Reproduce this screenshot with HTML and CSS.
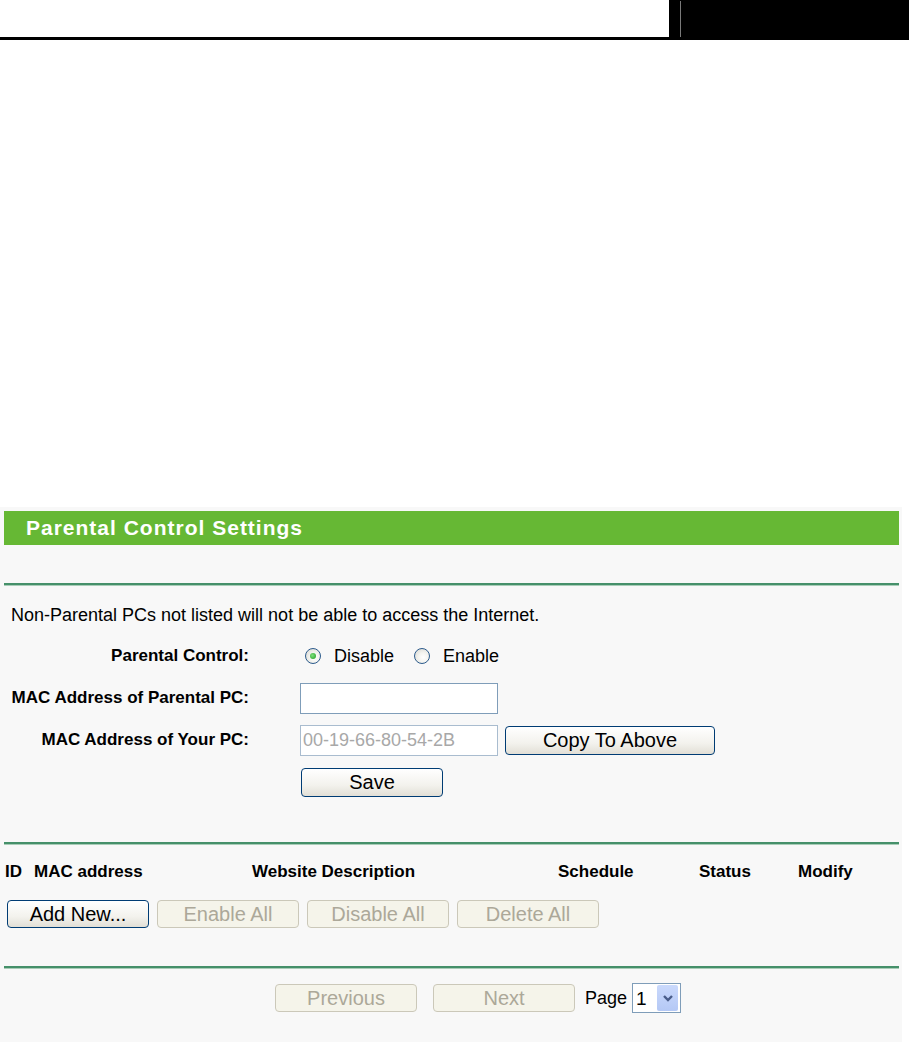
FILE: index.html
```html
<!DOCTYPE html>
<html lang="en">
<head>
    <meta charset="UTF-8">
    <meta name="viewport" content="width=device-width, initial-scale=1.0">
    <title>Parental Control Settings</title>
    <link rel="stylesheet" href="styles.css">
</head>
<body>
    <div class="topbar">
        <div class="topbar-block"><div class="topbar-rule"></div></div>
    </div>

    <div class="panel">
        <div class="title-bar">Parental Control Settings</div>
        <hr class="rule rule-top">

        <p class="note">Non-Parental PCs not listed will not be able to access the Internet.</p>

        <form class="settings" onsubmit="return false;">
            <div class="label">Parental Control:</div>
            <div class="field">
                <label class="radio"><input type="radio" name="pc" checked> Disable</label>
                <label class="radio"><input type="radio" name="pc"> Enable</label>
            </div>

            <div class="label">MAC Address of Parental PC:</div>
            <div class="field">
                <input type="text" class="text-input">
            </div>

            <div class="label">MAC Address of Your PC:</div>
            <div class="field">
                <input type="text" class="text-input readonly" value="00-19-66-80-54-2B" readonly>
                <button type="button" class="btn btn-wide">Copy To Above</button>
            </div>

            <div class="label"></div>
            <div class="field">
                <button type="submit" class="btn">Save</button>
            </div>
        </form>

        <hr class="rule rule-mid">

        <div class="list-head">
            <span>ID</span>
            <span>MAC address</span>
            <span>Website Description</span>
            <span>Schedule</span>
            <span>Status</span>
            <span>Modify</span>
        </div>
        <div class="list-actions">
            <button type="button" class="btn">Add New...</button>
            <button type="button" class="btn" disabled>Enable All</button>
            <button type="button" class="btn" disabled>Disable All</button>
            <button type="button" class="btn" disabled>Delete All</button>
        </div>

        <hr class="rule rule-low">

        <div class="pager">
            <button type="button" class="btn" disabled>Previous</button>
            <button type="button" class="btn btn-next" disabled>Next</button>
            <span class="page-label">Page</span>
            <span class="page-select">
                <select><option>1</option></select>
                <span class="page-arrow">
                    <svg width="12" height="10" viewBox="0 0 12 10"><path d="M2 3 L6 7 L10 3" fill="none" stroke="#4a5d8a" stroke-width="2.4"/></svg>
                </span>
            </span>
        </div>
    </div>
</body>
</html>
```

FILE: styles.css
```css
body {
    margin: 0;
    font-family: "Liberation Sans", Arial, sans-serif;
    color: #000;
    background: #fff;
}

.topbar {
    height: 37px;
    border-bottom: 3px solid #000;
    display: flex;
    justify-content: flex-end;
}
.topbar-block { width: 240px; background: #000; padding: 1px 0 0 11px; box-sizing: border-box; }
.topbar-rule { height: 36px; border-left: 1px solid #7a7a7a; }

.panel {
    width: 902px;
    margin-top: 467px;
    padding: 4px 3px 0 4px;
    box-sizing: border-box;
    background: #f8f8f8;
    height: 535px;
}
.title-bar {
    height: 34px;
    line-height: 34px;
    background: #66b834;
    color: #fff;
    font-size: 21px;
    font-weight: bold;
    letter-spacing: 1px;
    padding-left: 22px;
}

.rule {
    height: 0;
    margin: 0;
    border: none;
    border-top: 2px solid #46906a;
    border-bottom: 1px solid #a9cdb8;
}
.rule-top { margin-top: 38px; }
.rule-mid { margin-top: 39px; }
.rule-low { margin-top: 38px; }

.note { margin: 19px 0 0 7px; font-size: 18px; line-height: 20px; }

.settings {
    margin-top: 10px;
    display: grid;
    grid-template-columns: 245px 1fr;
    grid-auto-rows: 42px;
    column-gap: 51px;
}
.label {
    text-align: right;
    font-weight: bold;
    font-size: 17px;
    display: flex;
    align-items: center;
    justify-content: flex-end;
}
.field { display: flex; align-items: center; }

.radio { display: flex; align-items: center; font-size: 18px; margin-left: 5px; margin-right: 20px; }
.radio + .radio { margin-left: 0; }
.radio input {
    appearance: none;
    width: 16px;
    height: 16px;
    margin: 0 13px 0 0;
    border: 1.5px solid #2c5b8c;
    border-radius: 50%;
    background: radial-gradient(circle at 60% 60%, #fff 0, #f4f4f0 40%, #d4d3cc 100%);
    box-sizing: border-box;
    display: grid;
    place-items: center;
}
.radio input:checked::after {
    content: "";
    width: 6px;
    height: 6px;
    border-radius: 50%;
    background: radial-gradient(circle at 40% 40%, #7ee07e, #1f9c1f);
}

.text-input {
    width: 198px;
    height: 31px;
    border: 1px solid #7f9db9;
    background: #fff;
    box-sizing: border-box;
    font-family: inherit;
    font-size: 18px;
    padding: 0 2px;
    margin: 0;
}
.text-input.readonly { color: #a8a8a8; border-color: #a9bccf; }

.btn {
    width: 142px;
    height: 29px;
    margin: 0;
    padding: 0;
    border: 1px solid #003c74;
    border-radius: 4px;
    background: linear-gradient(#ffffff, #f3f2ed 60%, #e2dfd6);
    font-family: inherit;
    font-size: 20px;
    color: #000;
    cursor: pointer;
}
.btn:disabled {
    border-color: #cbc8b9;
    background: #f5f4ea;
    color: #aca899;
    cursor: default;
}
.field .btn { margin-left: 1px; }
.field .btn-wide { width: 210px; margin-left: 7px; }

.list-head {
    margin-top: 15px;
    height: 24px;
    display: grid;
    grid-template-columns: 29px 218px 306px 141px 99px 1fr;
    align-items: center;
    padding-left: 1px;
    font-weight: bold;
    font-size: 17px;
}
.list-actions {
    margin-top: 16px;
    padding-left: 3px;
    display: flex;
    gap: 8px;
}
.list-actions .btn { height: 28px; }

.pager {
    margin-top: 14px;
    padding-left: 271px;
    display: flex;
    align-items: center;
}
.pager .btn { height: 28px; }
.pager .btn-next { margin-left: 16px; }
.page-label { margin-left: 10px; font-size: 18px; }
.page-select {
    margin-left: 5px;
    width: 49px;
    height: 30px;
    border: 1px solid #7f9db9;
    background: #fff;
    box-sizing: border-box;
    display: flex;
    align-items: stretch;
}
.page-select select {
    appearance: none;
    border: none;
    background: transparent;
    width: 24px;
    padding: 0 0 0 3px;
    font-family: inherit;
    font-size: 19px;
}
.page-arrow {
    width: 21px;
    margin: 1px 1px 1px 0;
    background: linear-gradient(#cad9fc, #b4c8f5);
    border-radius: 2px;
    display: flex;
    align-items: center;
    justify-content: center;
}
```
